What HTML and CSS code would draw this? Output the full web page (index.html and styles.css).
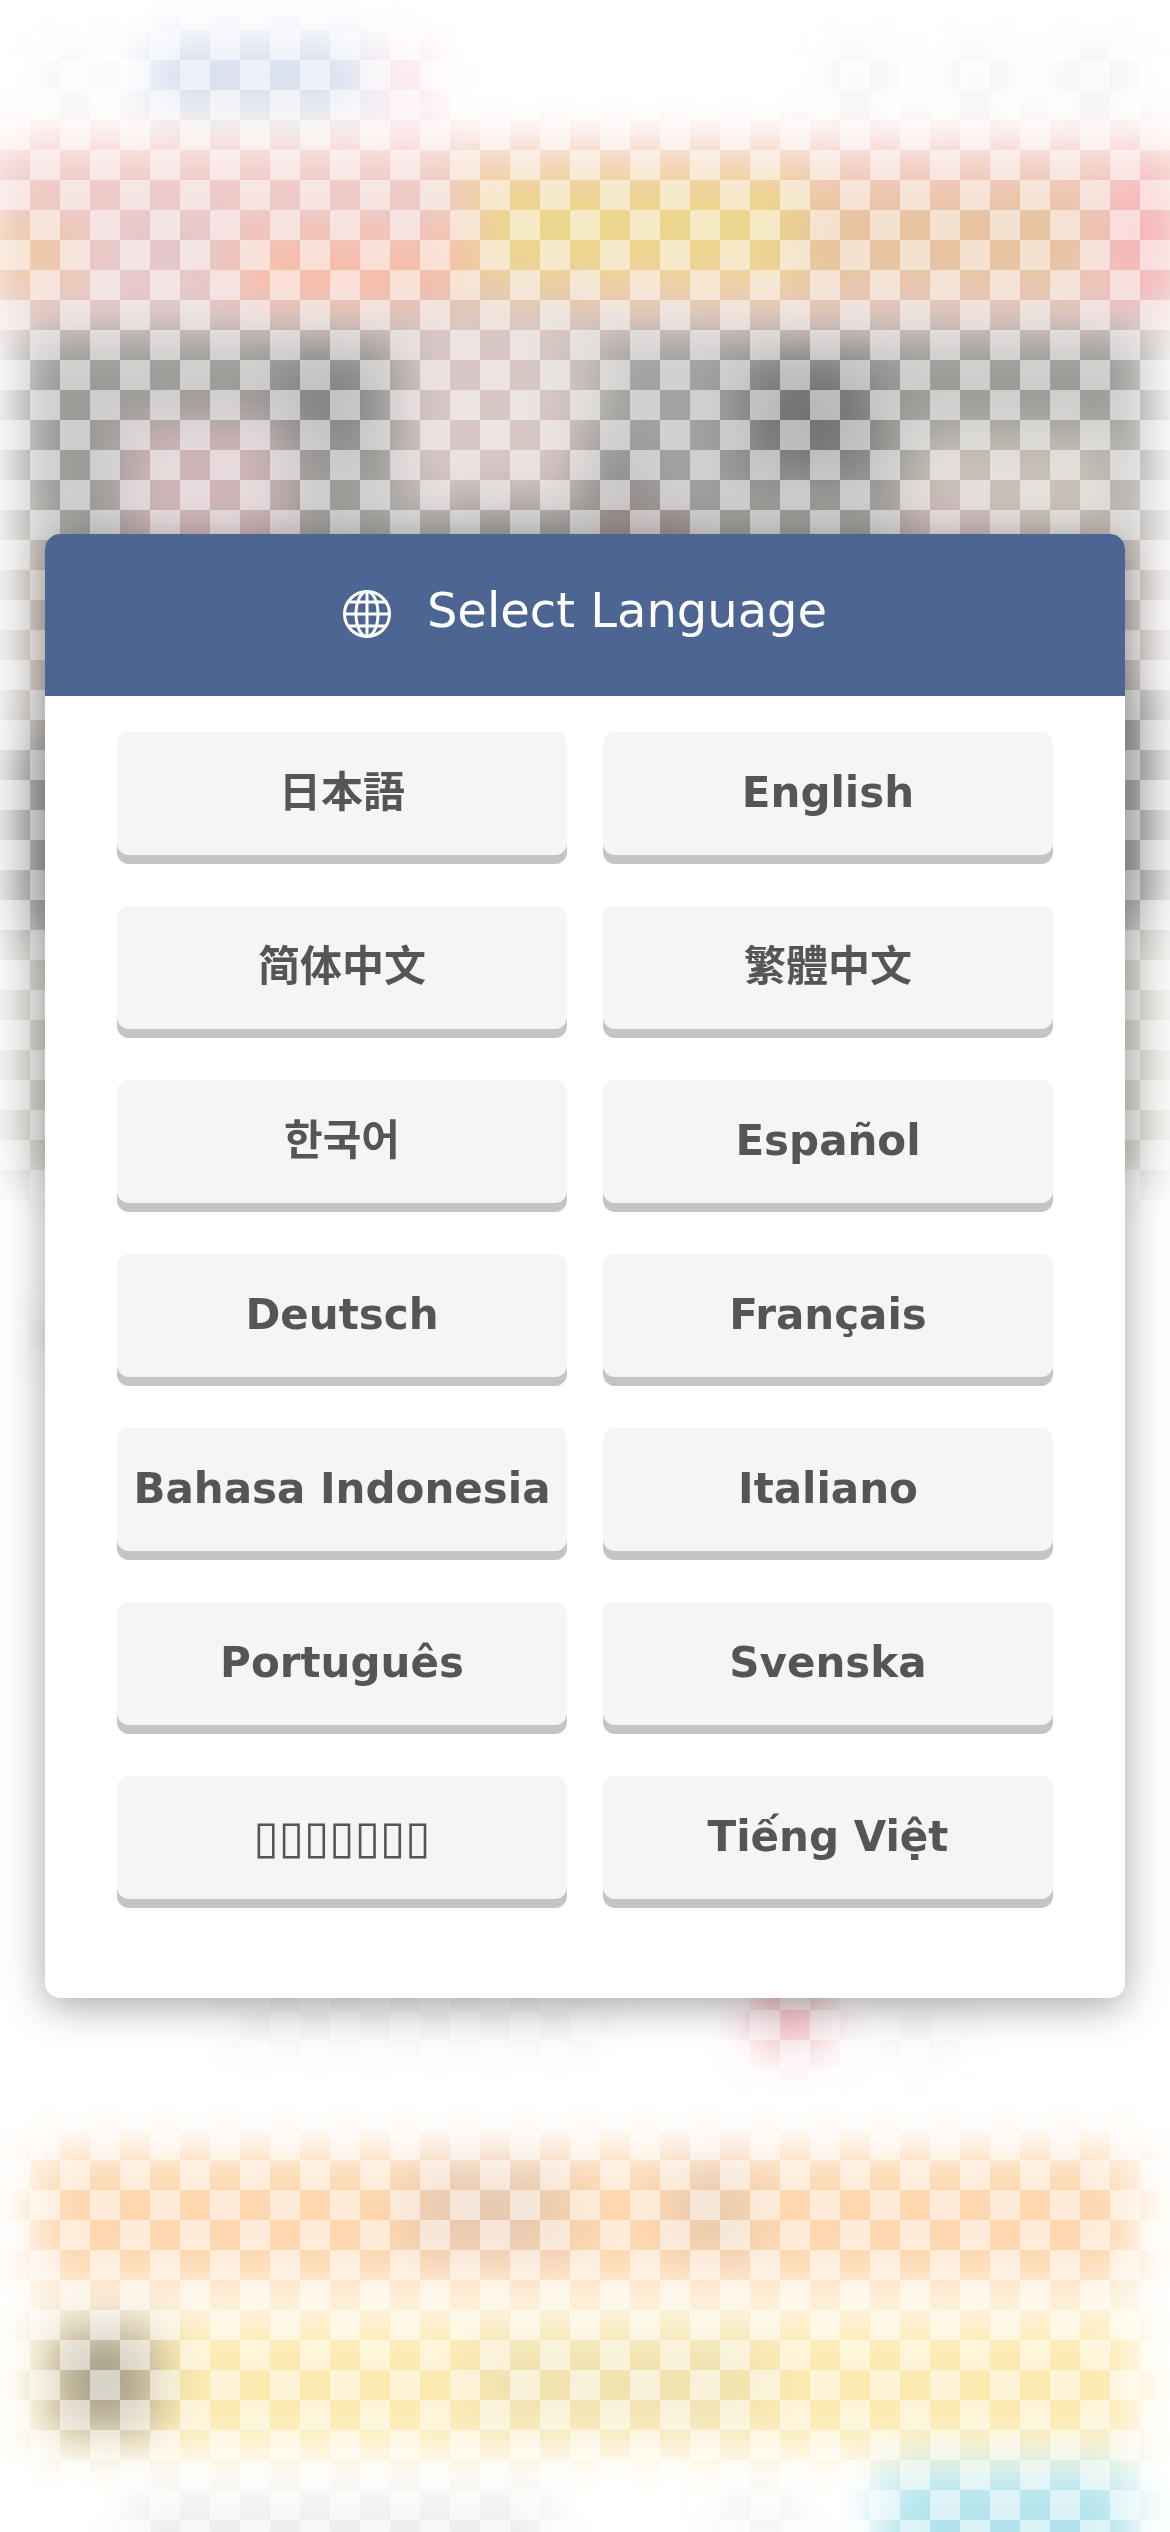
FILE: index.html
```html
<!DOCTYPE html>
<html lang="en">
<head>
<meta charset="utf-8">
<meta name="viewport" content="width=device-width, initial-scale=1">
<title>Select Language</title>
<link rel="stylesheet" href="styles.css">
</head>
<body>
<div class="backdrop" aria-hidden="true">
  <svg class="backdrop-art" viewBox="0 0 1170 2532" preserveAspectRatio="none">
    <defs>
      <filter id="soft" filterUnits="userSpaceOnUse" x="-100" y="-100" width="1370" height="2732" color-interpolation-filters="sRGB">
        <feGaussianBlur stdDeviation="24"/>
      </filter>
    </defs>
    <g filter="url(#soft)">
      <rect x="-100" y="-100" width="1370" height="2732" fill="#fff"/>
      <!-- top bar -->
      <rect x="40" y="50" width="60" height="60" fill="#f5f5f5"/>
      <rect x="148" y="42" width="216" height="68" fill="#d4dcec"/>
      <rect x="385" y="50" width="44" height="65" fill="#fbdbe7"/>
      <rect x="830" y="50" width="60" height="60" fill="#f2f2f3"/>
      <rect x="950" y="50" width="60" height="60" fill="#f2f2f3"/>
      <rect x="1060" y="50" width="70" height="60" fill="#f1f1f1"/>
      <!-- banner -->
      <rect x="-10" y="148" width="1200" height="174" fill="#ecc9c8"/>
      <rect x="-10" y="142" width="1200" height="40" fill="#f5cec9"/>
      <rect x="-10" y="225" width="80" height="60" fill="#f0c8a0"/>
      <rect x="100" y="215" width="130" height="90" fill="#e6c8ca"/>
      <rect x="235" y="240" width="230" height="60" fill="#f9bca4"/>
      <rect x="460" y="165" width="360" height="135" fill="#f1cea3"/>
      <rect x="490" y="185" width="310" height="85" fill="#ecd68a"/>
      <rect x="800" y="185" width="290" height="110" fill="#e8c3a0"/>
      <rect x="1115" y="180" width="50" height="120" fill="#fab2b4"/>
      <!-- photo -->
      <rect x="20" y="330" width="1130" height="400" fill="#9b9b98"/>
      <rect x="280" y="355" width="90" height="85" fill="#848485"/>
      <rect x="750" y="360" width="120" height="110" fill="#747474"/>
      <rect x="640" y="350" width="70" height="150" fill="#a2a3a4"/>
      <rect x="400" y="300" width="180" height="200" fill="#d8c7c5"/>
      <rect x="570" y="320" width="40" height="110" fill="#c4c0bb"/>
      <rect x="600" y="460" width="40" height="60" fill="#898784"/>
      <rect x="125" y="420" width="160" height="140" fill="#cfb5b8"/>
      <rect x="910" y="430" width="210" height="120" fill="#c8c1b8"/>
      <rect x="900" y="500" width="100" height="60" fill="#d0b9ba"/>
      <rect x="600" y="515" width="85" height="50" fill="#a08686"/>
      <rect x="360" y="500" width="110" height="60" fill="#a8a8a5"/>
      <rect x="16" y="530" width="60" height="210" fill="#c3bbb5"/>
      <rect x="1100" y="530" width="54" height="170" fill="#c1b7b3"/>
      <rect x="16" y="740" width="60" height="190" fill="#8c8c8d"/>
      <rect x="1100" y="700" width="54" height="220" fill="#868686"/>
      <rect x="16" y="930" width="60" height="250" fill="#c6c6bf"/>
      <rect x="1100" y="920" width="54" height="260" fill="#c8c8bf"/>
      <rect x="45" y="1310" width="30" height="50" fill="#d8d8d8"/>
      <!-- caption -->
      <rect x="230" y="1985" width="370" height="60" fill="#f3f3f3"/>
      <rect x="755" y="1985" width="70" height="65" fill="#f2b6be"/>
      <rect x="880" y="1990" width="80" height="65" fill="#f4f4f4"/>
      <!-- buttons -->
      <rect x="35" y="2152" width="1100" height="134" fill="#fed7af"/>
      <rect x="410" y="2165" width="160" height="90" fill="#e8cab0"/>
      <rect x="675" y="2165" width="75" height="90" fill="#e8cbaf"/>
      <rect x="35" y="2318" width="1100" height="130" fill="#fdeab0"/>
      <rect x="470" y="2335" width="300" height="95" fill="#f1e3b0"/>
      <rect x="55" y="2330" width="100" height="100" fill="#aaa28f"/>
      <rect x="130" y="2495" width="420" height="80" fill="#ededed"/>
      <rect x="720" y="2490" width="80" height="60" fill="#f3f3f3"/>
      <rect x="880" y="2468" width="252" height="120" fill="#b3e4ed"/>
    </g>
  </svg>
</div>

<main class="screen">
  <section class="card" aria-labelledby="card-title">
    <header class="card-header">
      <h1 class="card-title" id="card-title"><svg class="globe" viewBox="0 0 48 48" aria-hidden="true">
        <circle cx="24" cy="24" r="22.5"/>
        <ellipse cx="24" cy="24" rx="11" ry="22.5"/>
        <path d="M24 1.500V46.500M1.500 24H46.500M5 12H43M5 36H43"/>
      </svg>Select Language</h1>
    </header>
    <div class="languages">
      <button class="language" type="button" lang="ja">日本語</button>
      <button class="language" type="button" lang="en">English</button>
      <button class="language" type="button" lang="zh-Hans">简体中文</button>
      <button class="language" type="button" lang="zh-Hant">繁體中文</button>
      <button class="language" type="button" lang="ko">한국어</button>
      <button class="language" type="button" lang="es">Español</button>
      <button class="language" type="button" lang="de">Deutsch</button>
      <button class="language" type="button" lang="fr">Français</button>
      <button class="language" type="button" lang="id">Bahasa Indonesia</button>
      <button class="language" type="button" lang="it">Italiano</button>
      <button class="language" type="button" lang="pt">Português</button>
      <button class="language" type="button" lang="sv">Svenska</button>
      <button class="language language-boxes" type="button">▯▯▯▯▯▯▯</button>
      <button class="language" type="button" lang="vi">Tiếng Việt</button>
    </div>
  </section>
</main>
</body>
</html>
```
FILE: styles.css
```css
* {
  box-sizing: border-box;
}

body {
  margin: 0;
  background: #fff;
  color: #555;
  font-family: "DejaVu Sans", "Noto Sans CJK JP", sans-serif;
}

/* Blurred page behind the card, under a translucent checkerboard */
.backdrop {
  position: fixed;
  inset: 0;
  overflow: hidden;
}

.backdrop::after {
  content: "";
  position: absolute;
  inset: 0;
  background: conic-gradient(transparent 25%, rgba(255, 255, 255, 0.5) 0 50%, transparent 0 75%, rgba(255, 255, 255, 0.5) 0) 0 0 / 60px 60px;
}

.backdrop-art {
  display: block;
  width: 100%;
  height: 100%;
}

.screen {
  position: relative;
  display: flex;
  flex-direction: column;
  justify-content: center;
  min-height: 100vh;
  padding: 45px;
}

.card {
  overflow: hidden;
  border-radius: 15px;
  background: #fff;
  box-shadow: 0 8px 40px rgba(0, 0, 0, 0.35);
}

.card-header {
  padding: 40px 45px 50px;
  background: #4c6593;
  color: #fff;
  text-align: center;
}

.card-title {
  margin: 0;
  font-size: 48px;
  font-weight: 400;
  line-height: 72px;
}

.globe {
  width: 48px;
  height: 48px;
  margin-right: 36px;
  vertical-align: middle;
  fill: none;
  stroke: currentColor;
  stroke-width: 3;
}

.languages {
  display: grid;
  grid-template-columns: 1fr 1fr;
  gap: 51px 36px;
  padding: 36px 72px 99px;
}

.language {
  height: 123px;
  padding: 0 0 2px;
  border: 0;
  border-radius: 12px;
  background: #f5f5f5;
  box-shadow: 0 9px 0 #c4c4c4;
  color: inherit;
  font-family: inherit;
  font-size: 42px;
  font-weight: 700;
  line-height: 60px;
  white-space: nowrap;
  cursor: pointer;
}

.language:lang(zh-Hans) {
  font-family: "DejaVu Sans", "Noto Sans CJK SC", sans-serif;
}

.language:lang(zh-Hant) {
  font-family: "DejaVu Sans", "Noto Sans CJK TC", sans-serif;
}

.language:lang(ko) {
  font-family: "DejaVu Sans", "Noto Sans CJK KR", sans-serif;
}

.language-boxes {
  font-size: 46px;
}
```
